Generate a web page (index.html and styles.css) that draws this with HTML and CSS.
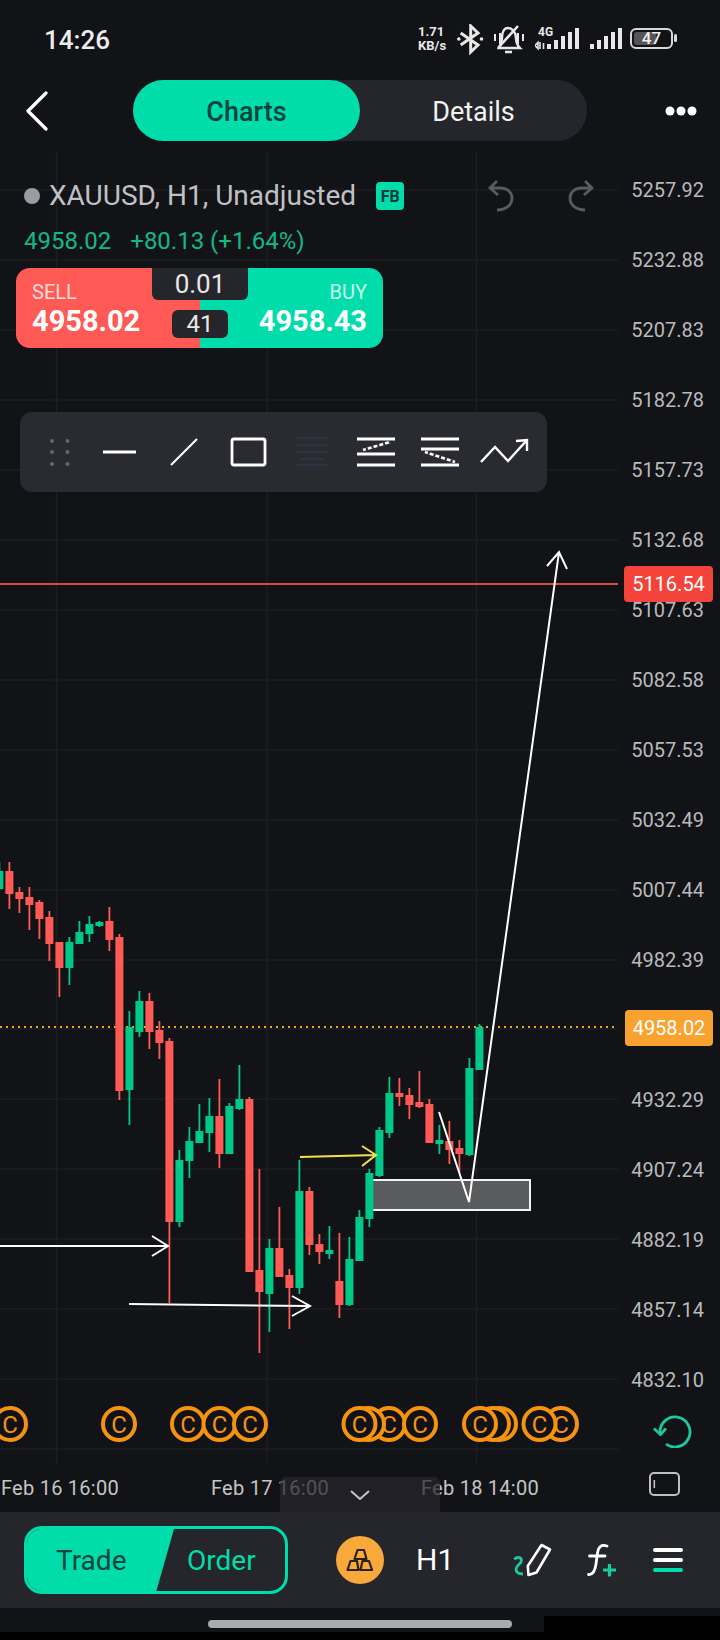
FILE: index.html
```html
<!DOCTYPE html>
<html lang="en">
<head>
<meta charset="utf-8">
<title>XAUUSD chart</title>
<link rel="stylesheet" href="styles.css">
</head>
<body>
<div class="app">
  <header class="status">
    <span class="time">14:26</span>
    <div class="status-icons">
      <span class="speed"><b>1.71</b><b>KB/s</b></span>
      <svg class="ic-bt" width="27" height="31" viewBox="0 0 27 31"><path d="M3.700 9L21 21l-7.300 7V2L21 9 3.700 21" fill="none" stroke="#e8e8e8" stroke-width="3"/><circle cx="1.800" cy="15" r="1.800" fill="#e8e8e8"/><circle cx="24.500" cy="15" r="1.800" fill="#e8e8e8"/></svg>
      <svg class="ic-bell" width="32" height="30" viewBox="0 0 32 30"><path d="M6 24H27C24 21 23 18 23 14 23 8 19 4 15 4 11 4 9 8 9 14 9 18 8 21 6 24Z M12 28H19" fill="none" stroke="#e8e8e8" stroke-width="2.400"/><path d="M5 24L25 2" stroke="#e8e8e8" stroke-width="2.600"/><path d="M2 10v7M7 9v11M25 9v11M30 10v7" stroke="#e8e8e8" stroke-width="2"/></svg>
      <div class="net">
        <b class="net-label">4G</b>
        <svg width="46" height="24" viewBox="0 0 46 24"><path d="M0 17.500l3-3v6zM5 14v7M8.500 15v6" stroke="#e8e8e8" stroke-width="1.600" fill="none"/><path d="M12 16h4v5h-4zM19 12h4v9h-4zM26 8h4v13h-4zM33 4h4v17h-4zM40 0h4v21h-4z" fill="#e8e8e8"/></svg>
      </div>
      <svg class="ic-sig" width="34" height="24" viewBox="0 0 34 24"><path d="M0 16h4v5H0zM7 12h4v9H7zM14 8h4v13h-4zM21 4h4v17h-4zM28 0h4v21h-4z" fill="#e8e8e8"/></svg>
      <div class="battery"><i class="battery-level"></i><span class="battery-text">47</span></div>
      <i class="battery-nub"></i>
    </div>
  </header>

  <nav class="nav">
    <svg class="back" width="24" height="40" viewBox="0 0 24 40"><path d="M21 2L3 20l18 18" fill="none" stroke="#fff" stroke-width="3.200" stroke-linecap="round" stroke-linejoin="round"/></svg>
    <div class="tabs">
      <span class="tab tab-on">Charts</span>
      <span class="tab">Details</span>
    </div>
    <svg class="more" width="32" height="12" viewBox="0 0 32 12"><circle cx="5" cy="6" r="4.500" fill="#fff"/><circle cx="16" cy="6" r="4.500" fill="#fff"/><circle cx="27" cy="6" r="4.500" fill="#fff"/></svg>
  </nav>

  <main class="chart">
    <svg class="plot" width="720" height="1360" viewBox="0 152 720 1360">
      <path class="grid" d="M56.500 152V1463M267 152V1463M476.500 152V1463M0 190H618M0 260H618M0 330H618M0 400H618M0 470H618M0 540H618M0 610H618M0 680H618M0 750H618M0 820H618M0 890H618M0 960H618M0 1029H618M0 1099H618M0 1169H618M0 1239H618M0 1309H618M0 1379H618M0 1449H618"/>
      <path class="alert-line" d="M0 584H618"/>
      <path class="last-line" d="M0 1027H618"/>
      <rect class="box" x="372" y="1180" width="158" height="30"/>
      <path class="wick red" d="M9.400 862V909M19.400 887V913M29.400 887V930M39.400 900V939M49.400 911V961M59.400 942V997M109.400 907V951M119.400 934V1100M149.400 993V1049M159.400 1021V1059M169.400 1038V1303M219.400 1079V1168M249.400 1097V1272M259.400 1169V1353M279.400 1207V1277M289.400 1269V1329M309.400 1187V1255M319.400 1234V1264M339.400 1233V1318M399.400 1078V1106M409.400 1088V1119M419.400 1071V1108M429.400 1099V1143M449.400 1121V1164M459.400 1140V1172"/>
      <path class="body red" d="M9.400 871V894M19.400 892V899M29.400 897V905M39.400 902V919M49.400 917V944M59.400 942V968M109.400 921V940M119.400 937V1091M149.400 1001V1032M159.400 1030V1043M169.400 1041V1222M219.400 1116V1154M249.400 1099V1272M259.400 1270V1292M279.400 1248V1277M289.400 1275V1288M309.400 1191V1245M319.400 1244V1252M339.400 1281V1305M399.400 1093V1097M409.400 1095V1105M419.400 1102V1107M429.400 1104V1143M449.400 1141V1150M459.400 1148V1154"/>
      <path class="wick green" d="M-.6 862V889M69.400 937V985M79.400 921V944M89.400 916V942M99.400 921V927M129.400 1011V1125M139.400 991V1037M179.400 1150V1227M189.400 1127V1178M199.400 1104V1143M209.400 1098V1152M229.400 1103V1154M239.400 1065V1110M269.400 1239V1332M299.400 1160V1294M329.400 1226V1259M349.400 1237V1306M359.400 1210V1261M369.400 1169V1227M379.400 1127V1177M389.400 1077V1138M439.400 1125V1154M469.400 1058V1156M479.400 1024V1070"/>
      <path class="body green" d="M-.6 871V889M69.400 942V968M79.400 932V944M89.400 924V934M99.400 922V926M129.400 1027V1090M139.400 1001V1032M179.400 1160V1222M189.400 1141V1161M199.400 1131V1143M209.400 1116V1133M229.400 1106V1154M239.400 1099V1109M269.400 1248V1294M299.400 1191V1288M329.400 1250V1254M349.400 1259V1305M359.400 1217V1261M369.400 1173V1219M379.400 1130V1176M389.400 1093V1133M439.400 1140V1144M469.400 1068V1155M479.400 1027V1070"/>
      <path class="draw" d="M0 1246H168M152 1236L168 1246L152 1256"/>
      <path class="draw" d="M129 1304L310 1306M292 1296L310 1306L292 1316"/>
      <path class="draw yellow" d="M300 1157L376 1155M362 1146L376 1155L362 1166"/>
      <path class="draw" d="M439 1112L469 1202L559 552M547 566L559 552L567 569"/>
      <g class="coins">
        <g><circle cx="10" cy="1424" r="16"/><text x="10" y="1432.500">C</text></g>
        <g><circle cx="119" cy="1424" r="16"/><text x="119" y="1432.500">C</text></g>
        <g><circle cx="188" cy="1424" r="16"/><text x="188" y="1432.500">C</text></g>
        <g><circle cx="219.500" cy="1424" r="16"/><text x="219.500" y="1432.500">C</text></g>
        <g><circle cx="250" cy="1424" r="16"/><text x="250" y="1432.500">C</text></g>
        <g><circle cx="389" cy="1424" r="16"/><text x="389" y="1432.500">C</text></g>
        <g><circle class="coin-ghost" cx="368" cy="1424" r="16"/></g>
        <g><circle cx="359.500" cy="1424" r="16"/><text x="359.500" y="1432.500">C</text></g>
        <g><circle cx="420" cy="1424" r="16"/><text x="420" y="1432.500">C</text></g>
        <g><circle cx="500" cy="1424" r="16"/></g>
        <g><circle cx="493" cy="1424" r="16"/></g>
        <g><circle cx="480" cy="1424" r="16"/><text x="480" y="1432.500">C</text></g>
        <g><circle cx="561" cy="1424" r="16"/><text x="561" y="1432.500">C</text></g>
        <g><circle cx="539.500" cy="1424" r="16"/><text x="539.500" y="1432.500">C</text></g>
      </g>
    </svg>

    <section class="legend">
      <div class="symbol-row">
        <i class="status-dot"></i>
        <span class="symbol">XAUUSD, H1, Unadjusted</span>
        <span class="badge">FB</span>
        <svg class="undo" width="26" height="34" viewBox="0 0 26 34"><path d="M9 2L2 9l8 7M2 9h10c7 0 12 4 12 10 0 7-6 12-15 12" fill="none" stroke="#5a5b5f" stroke-width="2.800"/></svg>
        <svg class="redo" width="26" height="34" viewBox="0 0 26 34"><path d="M17 2l7 7-8 7M24 9H14C7 9 2 13 2 19c0 7 6 12 15 12" fill="none" stroke="#5a5b5f" stroke-width="2.800"/></svg>
      </div>
      <div class="quote"><span>4958.02</span><span>+80.13 (+1.64%)</span></div>
      <div class="trade">
        <div class="side sell"><span class="side-label">SELL</span><b class="side-price">4958.02</b></div>
        <div class="side buy"><span class="side-label">BUY</span><b class="side-price">4958.43</b></div>
        <span class="lot">0.01</span>
        <span class="spread">41</span>
      </div>
      <div class="tools">
        <svg width="527" height="80" viewBox="20 412 527 80">
          <g fill="#66676d"><circle cx="52" cy="441" r="2"/><circle cx="67.500" cy="441" r="2"/><circle cx="52" cy="452" r="2"/><circle cx="67.500" cy="452" r="2"/><circle cx="52" cy="464" r="2"/><circle cx="67.500" cy="464" r="2"/></g>
          <g class="tool-stroke">
            <path d="M103 452H136"/>
            <path d="M171 465L197 439" stroke-width="2.200"/>
            <rect x="232" y="439" width="33" height="26" rx="2"/>
            <path d="M357 439H395M357 454H395M357 465H395M363 450L390 442" />
            <path d="M421 439H459M421 449H459M421 465H459M425 452L455 462"/>
            <path d="M481 462L495 447L508 461L527 440M516 441L527 440V451" stroke-width="2.400"/>
          </g>
          <path class="tool-faded" d="M296 438H328M296 445H328M296 452H328M300 459H324M296 465H328"/>
          <path class="tool-dash" d="M363 450L390 442M425 452L455 462"/>
        </svg>
      </div>
    </section>

    <aside class="axis">
      <span>5257.92</span><span>5232.88</span><span>5207.83</span><span>5182.78</span><span>5157.73</span><span>5132.68</span><span>5107.63</span><span>5082.58</span><span>5057.53</span><span>5032.49</span><span>5007.44</span><span>4982.39</span><span></span><span>4932.29</span><span>4907.24</span><span>4882.19</span><span>4857.14</span><span>4832.10</span>
    </aside>
    <span class="tag tag-alert">5116.54</span>
    <span class="tag tag-last">4958.02</span>

    <svg class="side-refresh" width="40" height="36" viewBox="652 1412 40 36"><path d="M660 1433A15 15 0 1 1 666 1444" fill="none" stroke="#1cc8a0" stroke-width="2.800"/><path d="M654 1428.500L660.500 1434.500L666 1428.500" fill="none" stroke="#1cc8a0" stroke-width="2.800"/></svg>
    <svg class="side-panel" width="32" height="25" viewBox="649 1472 32 25"><rect x="650" y="1473" width="29" height="22" rx="4" fill="none" stroke="#c0c0c0" stroke-width="2"/><path d="M654.300 1480V1488" stroke="#c0c0c0" stroke-width="1.600"/></svg>

    <footer class="times">
      <span>Feb 16 16:00</span><span>Feb 17 16:00</span><span>Feb 18 14:00</span>
    </footer>
    <div class="handle"><svg width="20" height="10" viewBox="0 0 20 10"><path d="M1 1l9 8 9-8" fill="none" stroke="#c4c4c4" stroke-width="2"/></svg></div>
  </main>

  <section class="bottom">
    <div class="toggle">
      <span class="seg seg-trade">Trade</span>
      <span class="seg seg-order">Order</span>
    </div>
    <span class="gold">
      <svg width="48" height="48" viewBox="336 1536 48 48"><path d="M357.500 1550H364L366.500 1559H354.500ZM350.500 1561H357L358.500 1570H347.500ZM362.500 1561H369L372 1570H360.500Z" fill="none" stroke="#2a2118" stroke-width="2.200" stroke-linejoin="round"/></svg>
    </span>
    <span class="period">H1</span>
    <svg class="draw-ic" width="40" height="34" viewBox="512 1542 40 34"><path d="M514.500 1558.500C516 1555.500 521.500 1555.500 521.500 1559.500C521.500 1563 516 1564 516 1568C516 1571.500 519 1573 523 1573" fill="none" stroke="#1cc8a0" stroke-width="2.800"/><path d="M541.500 1544L550 1548.500L536.500 1571.500L528.500 1574L527.800 1565Z" fill="none" stroke="#fff" stroke-width="2.600" stroke-linejoin="round"/></svg>
    <svg class="fx-ic" width="32" height="34" viewBox="586 1543 32 34"><path d="M607 1546C601 1544 598.500 1547 597.500 1553L596 1564C595 1571 592.500 1575 588.500 1574.500M589.500 1556H605" fill="none" stroke="#fff" stroke-width="2.800" stroke-linecap="round"/><path d="M603 1570H616M609.500 1564V1576.500" stroke="#1cc8a0" stroke-width="3.200"/></svg>
    <div class="menu"><i></i><i></i><i class="menu-on"></i></div>
  </section>

  <div class="home"><i class="home-bar"></i><i class="home-patch"></i></div>
</div>
</body>
</html>
```

FILE: styles.css
```css
* { box-sizing: border-box; }
html, body { margin: 0; padding: 0; background: #000; }
body { font-family: Roboto, "Liberation Sans", sans-serif; color: #fff; }
i { display: block; }
svg { flex: none; }

.app { width: 720px; height: 1640px; display: flex; flex-direction: column; background: #121316; overflow: hidden; }

/* status bar */
.status { height: 72px; flex: none; display: flex; align-items: flex-start; justify-content: space-between; padding: 25px 43px 0 44px; }
.time { font-size: 26px; line-height: 30px; font-weight: 500; color: #ececec; }
.status-icons { display: flex; align-items: flex-start; margin-top: -1px; }
.speed { display: flex; flex-direction: column; width: 30px; margin-right: 9px; margin-top: 1px; font-size: 13px; line-height: 14px; color: #e8e8e8; white-space: nowrap; }
.ic-bt { margin-right: 9px; }
.ic-bell { margin-right: 10px; }
.net { position: relative; width: 46px; height: 27px; margin-top: 1px; margin-right: 9px; }
.net svg { position: absolute; left: 0; top: 3px; }
.net-label { position: absolute; left: 3px; top: 1px; font-size: 12px; line-height: 12px; color: #e8e8e8; }
.ic-sig { margin-top: 4px; margin-right: 6px; }
.battery { position: relative; width: 43px; height: 21px; margin-top: 4px; border: 2px solid #d8d8d8; border-radius: 6px; padding: 2px; }
.battery-level { width: 22px; height: 13px; background: #555; border-radius: 3px; }
.battery-text { position: absolute; inset: 0; text-align: center; font-size: 17px; line-height: 17px; font-weight: 500; color: #eee; }
.battery-nub { width: 3px; height: 8px; margin: 10px 0 0 1px; background: #d8d8d8; border-radius: 2px; }

/* nav */
.nav { height: 61px; flex: none; margin-top: 8px; display: flex; align-items: center; position: relative; padding-left: 25px; }
.back { flex: none; }
.tabs { margin-left: 84px; width: 454px; height: 61px; display: flex; border-radius: 31px; background: #25262c; flex: none; }
.tab { flex: none; width: 227px; display: flex; align-items: center; justify-content: center; padding-top: 2px; font-size: 27px; color: #f2f2f2; border-radius: 31px; }
.tab-on { background: #00dcaa; color: #064240; font-weight: 500; }
.more { margin-left: 78px; }

/* chart */
.chart { position: relative; flex: none; margin-top: 11px; height: 1360px; display: flex; flex-direction: column; }
.plot { position: absolute; left: 0; top: 0; }
.grid { stroke: #1d1e21; stroke-width: 1.500; fill: none; }
.alert-line { stroke: #dc4a3e; stroke-width: 2; fill: none; }
.last-line { stroke: #f5a623; stroke-width: 2; stroke-dasharray: 2 4; fill: none; }
.box { fill: #5a5b5d; stroke: #f2f2f2; stroke-width: 2; }
.wick { fill: none; stroke-width: 1.800; }
.body { fill: none; stroke-width: 8; }
.red { stroke: #ff5a55; }
.green { stroke: #00c887; }
.draw { fill: none; stroke: #fff; stroke-width: 2; }
.yellow { stroke: #f5e04a; }
.coins circle { fill: #111216; stroke: #f5930f; stroke-width: 4; }
.coins text { font-family: Roboto, sans-serif; font-size: 24px; fill: #f5930f; text-anchor: middle; }

.legend { position: relative; padding: 24px 0 0 16px; width: 620px; }
.symbol-row { height: 40px; display: flex; align-items: center; padding-left: 8px; }
.status-dot { flex: none; width: 16px; height: 16px; border-radius: 50%; background: #9a9ba3; }
.symbol { flex: none; margin-left: 9px; font-size: 28px; line-height: 40px; color: #c0c1c4; white-space: nowrap; }
.badge { flex: none; margin-left: 20px; width: 28px; height: 28px; border-radius: 4px; background: #00dcaa; color: #0d3b3a; font-size: 16px; font-weight: 700; display: flex; align-items: center; justify-content: center; }
.undo { margin-left: 84px; }
.redo { margin-left: 54px; }
.quote { margin-top: 5px; height: 40px; display: flex; align-items: center; gap: 19px; padding-left: 8px; font-size: 24px; color: #14b888; }
.trade { position: relative; margin-top: 7px; width: 367px; height: 80px; display: flex; border-radius: 14px; overflow: hidden; }
.side { width: 50%; padding: 12px 16px 0; display: flex; flex-direction: column; }
.sell { background: #ff5a55; }
.buy { background: #00dcaa; align-items: flex-end; }
.side-label { font-size: 20px; line-height: 24px; color: rgba(255, 255, 255, .8); }
.side-price { font-size: 29px; line-height: 34px; color: #fff; }
.lot { position: absolute; left: 136px; top: 0; width: 96px; height: 32px; background: #25262c; border-radius: 0 0 6px 6px; font-size: 26px; line-height: 32px; text-align: center; color: #e8e8ea; }
.spread { position: absolute; left: 156px; top: 42px; width: 56px; height: 28px; background: #25262c; border-radius: 6px; font-size: 24px; line-height: 28px; text-align: center; color: #e8e8ea; }
.tools { margin: 64px 0 0 4px; width: 527px; height: 80px; background: #2a2b31; border-radius: 12px; }
.tools svg { display: block; }
.tool-stroke { fill: none; stroke: #fff; stroke-width: 2.800; }
.tool-faded { fill: none; stroke: #2c3342; stroke-width: 2.500; }
.tool-dash { fill: none; stroke: #2a2b31; stroke-width: 3.200; stroke-dasharray: 2 4; stroke-dashoffset: 3; }

.axis { position: absolute; right: 16px; top: 3px; width: 90px; display: flex; flex-direction: column; }
.axis span { height: 70px; display: flex; align-items: center; justify-content: flex-end; font-size: 20px; color: #b9babc; }
.tag { position: absolute; left: 624px; width: 89px; height: 36px; border-radius: 4px; font-size: 20px; line-height: 36px; text-align: center; color: #fff; }
.tag-alert { top: 414px; background: #f4433a; }
.tag-last { top: 858px; left: 625px; width: 88px; background: #f9a22f; }
.side-refresh { position: absolute; left: 652px; top: 1260px; }
.side-panel { position: absolute; left: 649px; top: 1320px; }

.times { margin-top: auto; height: 70px; padding: 29px 0 0 1px; display: flex; font-size: 20px; letter-spacing: .25px; line-height: 34px; color: #c4c5c7; position: relative; }
.times span { width: 210px; white-space: nowrap; flex: none; }
.handle { position: absolute; left: 280px; bottom: 0; width: 160px; height: 35px; border-radius: 6px 6px 0 0; background: rgba(37, 38, 44, .72); display: flex; justify-content: center; padding-top: 13px; }

/* bottom bar */
.bottom { height: 96px; flex: none; background: #25262b; display: flex; align-items: center; padding-left: 24px; position: relative; }
.toggle { width: 264px; height: 68px; border: 3px solid #00dcaa; border-radius: 18px; overflow: hidden; display: flex; flex: none; position: relative; }
.seg { display: flex; align-items: center; font-size: 28px; height: 100%; }
.seg-trade { width: 147px; background: #00dcaa; color: #064240; padding-left: 29px; clip-path: polygon(0 0, 100% 0, 88% 100%, 0 100%); }
.seg-order { color: #00dcaa; padding-left: 13px; }
.gold { margin-left: 48px; width: 48px; height: 48px; border-radius: 50%; background: #f9a83a; display: flex; align-items: center; justify-content: center; flex: none; }
.period { flex: none; margin-left: 32px; font-size: 30px; line-height: 36px; width: 60px; color: #fff; }
.draw-ic { margin-left: 36px; }
.fx-ic { margin-left: 34px; }
.menu { flex: none; margin-left: 35px; width: 30px; display: flex; flex-direction: column; gap: 6px; }
.menu i { height: 4px; background: #fff; border-radius: 2px; }
.menu .menu-on { background: #00dcaa; }

/* gesture area */
.home { position: relative; flex: 1; background: linear-gradient(#121316 24px, #000 24px); padding: 12px 0 0 208px; }
.home-bar { width: 304px; height: 8px; border-radius: 4px; background: #aaabad; position: relative; z-index: 1; }
.home-patch { position: absolute; left: 544px; right: 0; top: 8px; bottom: 0; background: #000; }
```
